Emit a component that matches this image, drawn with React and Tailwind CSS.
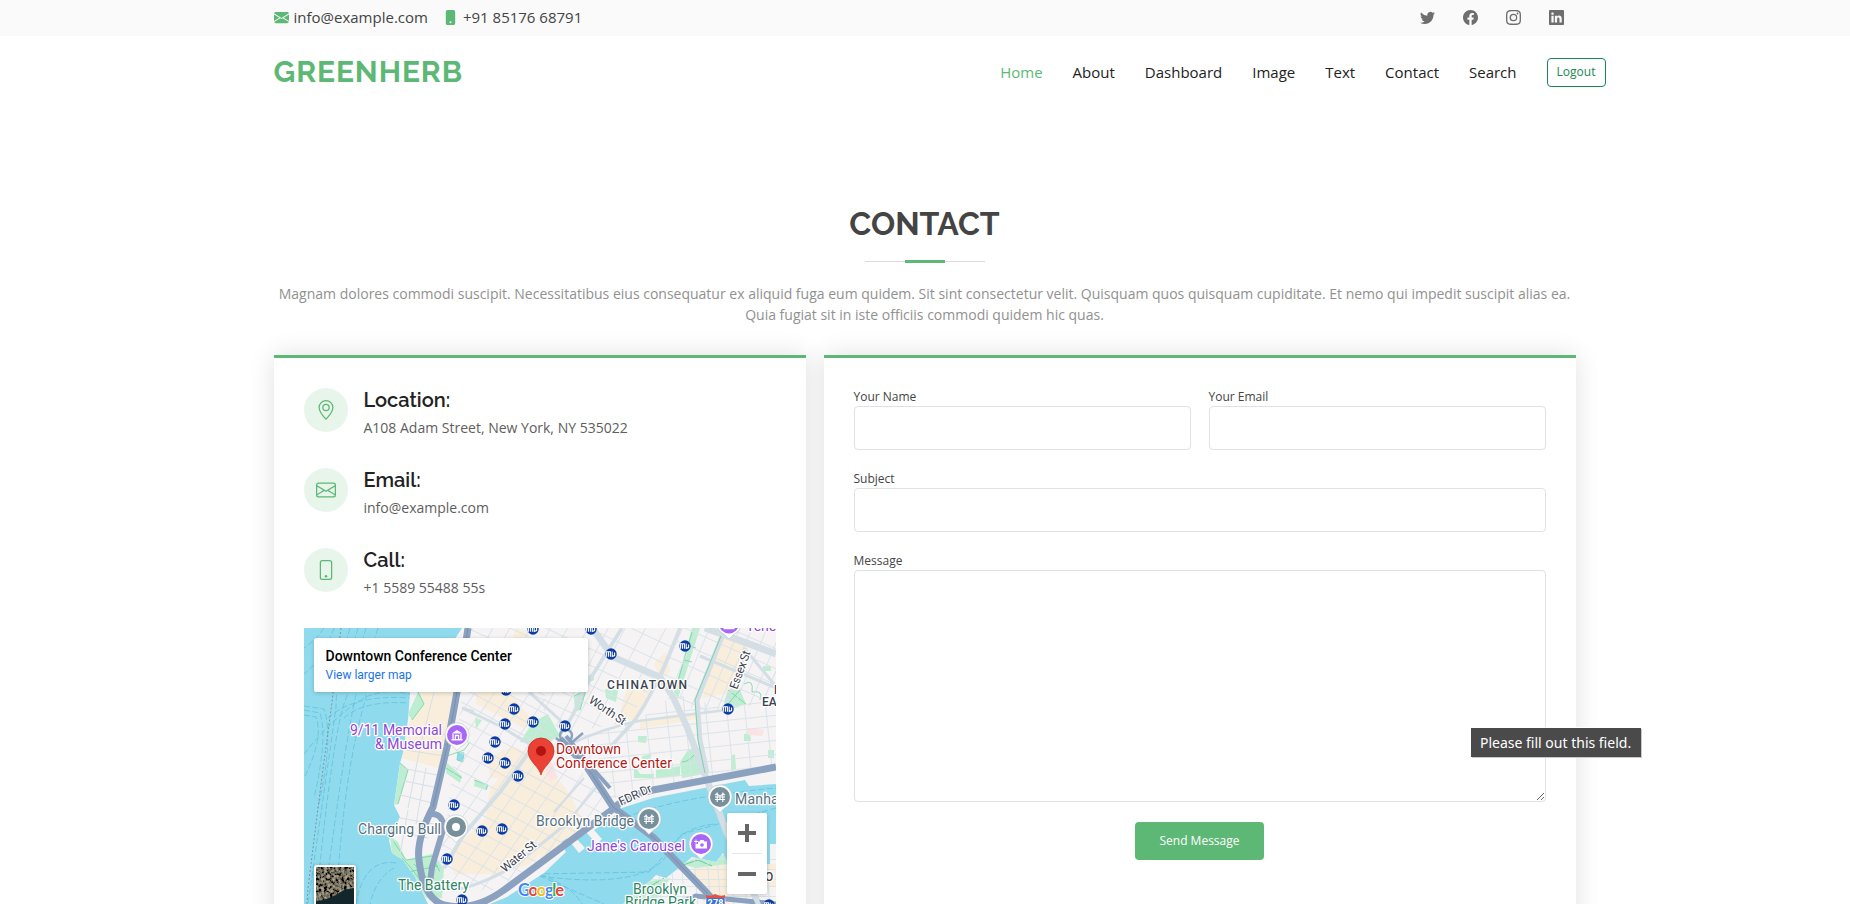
import React from "react";
import {
  BsEnvelopeFill,
  BsPhoneFill,
  BsTwitter,
  BsFacebook,
  BsInstagram,
  BsLinkedin,
  BsGeoAlt,
  BsEnvelope,
  BsPhone,
} from "react-icons/bs";

const NAV = ["Home", "About", "Dashboard", "Image", "Text", "Contact", "Search"];

function TopBar() {
  return (
    <div className="h-[36px] bg-[#fafafa]">
      <div className="mx-auto flex h-[35px] w-[1302px] items-center justify-between text-[15px] leading-[21px] text-[#444]">
        <div className="flex items-center">
          <BsEnvelopeFill className="size-[15px] text-[#5cb874]" />
          <span className="ml-[5px]">info@example.com</span>
          <BsPhoneFill className="ml-[15px] size-[15px] text-[#5cb874]" />
          <span className="ml-[5px]">+91 85176 68791</span>
        </div>
        <div className="mr-[12px] flex items-center gap-[28px] text-[#6e6e6e]">
          <BsTwitter className="size-[15px]" />
          <BsFacebook className="size-[15px]" />
          <BsInstagram className="size-[15px]" />
          <BsLinkedin className="size-[15px]" />
        </div>
      </div>
    </div>
  );
}

function Header() {
  return (
    <header className="mx-auto flex h-[72px] w-[1302px] items-center justify-between">
      <h1 className="-mt-[1px] font-['Raleway','Lato',sans-serif] text-[30px] leading-[36px] font-bold tracking-[0.9px] text-[#5cb874]">
        GREENHERB
      </h1>
      <nav className="-mr-[30px] flex items-center gap-[30px] text-[15px] leading-[22px] text-[#222]">
        {NAV.map((item, i) => (
          <a key={item} className={i === 0 ? "pb-[1px] text-[#5cb874]" : "pb-[1px]"}>
            {item}
          </a>
        ))}
        <button className="mt-[1px] h-[29px] w-[59px] rounded-[4px] border border-[#198754] pb-[1px] text-[12px] leading-[18px] text-[#198754]">
          Logout
        </button>
      </nav>
    </header>
  );
}

function InfoItem({ icon: Icon, title, text }) {
  return (
    <div className="flex h-[80px] gap-4">
      <div className="flex size-[44px] shrink-0 items-center justify-center rounded-full bg-[#e8f5eb] text-[#5cb874]">
        <Icon className="size-[20px]" />
      </div>
      <div>
        <h4 className="font-['Raleway','Lato',sans-serif] text-[20px] leading-[24px] font-semibold text-[#222]">{title}</h4>
        <p className="mt-[5px] text-[14px] leading-[21px] text-[#5e5e5e]">{text}</p>
      </div>
    </div>
  );
}

const STATIONS = [
  [229, 1], [202, 62], [210, 81], [201, 96], [229, 94], [191, 114], [184, 130],
  [201, 135], [214, 148], [150, 177], [178, 203], [198, 201], [143, 231],
  [158, 272], [287, 1], [307, 26], [381, 18], [424, 81], [261, 98], [465, 277],
];

const MANHATTAN =
  "M158 0 L132 40 L106 64 L104 92 L99 125 L96 135 L90 177 L96 189 L85 212 L88 225 L99 232 L111 249 L124 276 L176 280 L203 269 L240 245 L262 224 L257 214 L263 210 L275 225 L281 220 L270 208 L279 201 L293 216 L298 211 L290 202 L308 190 L318 180 L349 170 L400 160 L441 152 L445 158 L472 156 L472 0 Z";
const BROOKLYN =
  "M376 239 L388 229 L412 234 L419 225 L424 236 L466 236 L466 216 L472 216 L472 276 L319 276 L334 262 L346 253 L352 247 L362 250 Z";

// Evenly spaced parallel street lines around a centre point.
function Streets({ cx, cy, angle, n, gap, len, stroke = "#dae2e9", width = 0.9 }) {
  return (
    <g transform={`translate(${cx} ${cy}) rotate(${angle})`} stroke={stroke} strokeWidth={width}>
      {Array.from({ length: n }, (_, i) => {
        const y = (i - (n - 1) / 2) * gap + ((i * 7) % 3) - 1;
        return <line key={i} x1={-len / 2 + ((i * 13) % 17)} x2={len / 2 - ((i * 11) % 19)} y1={y} y2={y} />;
      })}
    </g>
  );
}

function Pin({ x, y, color, children }) {
  return (
    <g transform={`translate(${x} ${y})`}>
      <path d="M0 15.5 L-4.5 11 A12 12 0 1 1 4.5 11 Z" fill="#fff" stroke="#b9c3cc" strokeWidth="0.6" />
      <circle r="10" fill={color} />
      {children}
    </g>
  );
}

function BridgeGlyph() {
  return (
    <path
      d="M-5 0 H5 M-5 2.500 H5 M-2.8 -4.5 V5 M2.8 -4.5 V5 M-5 -2 L-2.8 -3.5 Q0 1 2.8 -3.5 L5 -2 M0 -1 V2"
      stroke="#fff"
      strokeWidth="1.1"
      fill="none"
    />
  );
}

const halo = { stroke: "#fff", strokeWidth: 2.6, strokeLinejoin: "round", paintOrder: "stroke" };

function MapDrawing() {
  return (
    <svg width="472" height="276" viewBox="0 0 472 276" className="block font-['Roboto',sans-serif]">
      <defs>
        <clipPath id="land"><path d={MANHATTAN} /></clipPath>
        <clipPath id="bk"><path d={BROOKLYN} /></clipPath>
        <clipPath id="fin"><path d="M158 64 L240 64 L250 112 L309 179 L236 233 L190 262 L150 262 L128 238 L143 190 Z" /></clipPath>
        <clipPath id="north"><path d="M166 0 L376 0 L356 49 L320 95 L258 105 L225 64 L158 64 Z" /></clipPath>
        <clipPath id="east"><path d="M331 95 L370 66 L419 80 L472 70 L472 138 L349 160 L305 172 L262 112 Z" /></clipPath>
        <clipPath id="les"><path d="M376 0 L472 0 L472 75 L393 85 L370 66 L356 49 Z" /></clipPath>
      </defs>
      <rect width="472" height="276" fill="#90daee" />

      <g fill="none" stroke="#5fc1dc" strokeWidth="0.8" strokeDasharray="6 2.5">
        <path d="M54 0 Q40 50 44 66 Q30 90 12 276" />
        <path d="M62 0 Q48 50 52 66 Q40 120 20 276" />
        <path d="M74 0 Q58 50 62 70 Q40 140 32 276" />
        <path d="M46 0 Q32 50 32 80 L4 276" />
        <path d="M30 0 Q20 30 0 46" />
        <path d="M20 0 Q12 12 0 20" />
        <path d="M0 78 L20 81 Q30 110 14 180" />
        <path d="M0 82 L16 85 Q24 110 10 170" />
        <path d="M0 87 L12 89 Q20 110 0 150" />
        <path d="M0 126 Q30 88 60 70 Q80 60 106 66" />
        <path d="M24 90 Q50 66 106 70" />
        <path d="M40 90 Q60 72 104 75" />
        <path d="M92 235 Q60 230 52 276" />
        <path d="M90 240 Q72 250 66 276" />
        <path d="M232 246 L345 244 Q362 226 378 206 L472 180" />
        <path d="M236 248 Q340 262 364 226 Q374 200 410 196" />
        <path d="M306 196 Q360 170 472 160" />
        <path d="M236 248 L300 276 M236 246 Q270 260 278 276" />
      </g>
      <path d="M37 0 L28 74 L16 164 L4 260 L3 276" fill="none" stroke="#7a93a0" strokeWidth="1" strokeDasharray="2 2" />

      <path d={MANHATTAN} fill="#f5f3f4" />
      <path d={BROOKLYN} fill="#f5f3f4" />

      <g clipPath="url(#land)">
        <g fill="#f8eedb">
          <path d="M114 64 L152 64 L135 140 L98 130 L106 92 Z" />
          <path d="M172 64 L206 64 L228 92 L220 100 L172 76 Z" />
          <path d="M226 118 L250 148 L262 160 L278 190 L262 200 L226 236 L196 246 L150 246 L146 226 L182 190 L186 160 Z" />
          <path d="M184 130 L210 118 L224 126 L206 150 L186 150 Z" />
          <path d="M318 76 L326 50 L348 60 L336 84 L330 92 L316 90 Z" />
          <path d="M350 36 L362 24 L366 44 L356 50 Z" />
          <path d="M418 4 L446 14 L432 64 L398 70 Z" />
          <path d="M212 0 L226 4 L214 30 L204 24 Z" />
          <path d="M336 94 L392 84 L392 91 L336 101 Z" />
          <path d="M240 176 L290 200 L260 222 L236 230 Z" />
        </g>
        <g fill="#bdeed1">
          <path d="M114 64 L120 76 L108 92 L104 86 Z" />
          <path d="M96 135 L104 142 L94 176 L90 177 Z" />
          <path d="M86 208 L94 214 L102 232 L128 226 L140 240 L138 270 L122 270 L99 232 L88 226 Z" />
          <path d="M229 94 L244 86 L256 108 L240 116 L216 114 Z" />
          <path d="M143 135 L158 148 L156 155 L142 145 Z" />
          <path d="M171 152 L184 157 L182 162 L170 158 Z" />
          <path d="M178 92 L172 101 L171 90 Z" />
          <path d="M301 61 L314 62 L312 74 L302 70 Z" />
          <path d="M388 0 L396 0 L374 70 L370 64 Z" />
          <path d="M270 68 L282 62 L276 82 L271 84 Z" />
          <path d="M284 48 L290 44 L290 52 L286 54 Z" />
          <path d="M424 62 L436 62 L442 76 L430 80 L420 74 Z" />
          <path d="M376 134 L384 122 L396 120 L400 146 L378 150 Z" />
          <path d="M334 108 L343 108 L342 115 L334 114 Z" />
          <path d="M338 128 L347 126 L347 134 L338 136 Z" />
          <path d="M330 136 L336 146 L350 146 L350 150 L330 150 Z" />
          <path d="M352 142 L376 138 L376 148 L352 150 Z" />
          <path d="M427 128 L431 126 L432 141 L427 142 Z" />
          <path d="M440 106 L446 105 L447 113 L440 113 Z" />
          <path d="M464 122 L470 122 L470 130 L464 130 Z" />
          <path d="M459 38 L467 38 L467 43 L459 43 Z" />
        </g>
        <g fill="none" stroke="#63cf9b" strokeWidth="0.7">
          <path d="M114 64 L120 76 L108 92 M96 135 L104 142 L94 176 M90 214 L102 232 L128 228 L136 244 M110 236 L134 262 M104 244 L134 238 M98 230 Q118 250 126 272" />
          <path d="M143 128 L160 122 L166 114 M142 140 L158 150 M170 152 L184 157 L182 162 M388 4 L372 60 M384 18 L392 20 M380 32 L388 34" />
          <path d="M270 68 L282 62 L276 82 M424 62 L442 76 M436 62 L424 76 M378 134 Q386 134 394 122 M440 56 Q450 50 448 64 Q460 62 456 72" />
        </g>
        <path d="M444 100 L460 102 L458 108 L444 107 Z" fill="#fbe3e3" />
        <path d="M247 134 L254 150 L246 153 L240 138 Z" fill="#fbe3e3" />
        <path d="M154 124 L160 125 L159 134 L153 132 Z" fill="#90daee" stroke="#63cf9b" strokeWidth="0.6" />
      </g>

      <g clipPath="url(#fin)">
        <Streets cx={205} cy={160} angle={-55} n={14} gap={15} len={250} />
        <Streets cx={205} cy={160} angle={28} n={14} gap={15} len={230} />
      </g>
      <g clipPath="url(#north)">
        <Streets cx={260} cy={45} angle={25} n={9} gap={17} len={280} />
        <Streets cx={260} cy={45} angle={-62} n={15} gap={17} len={240} />
      </g>
      <g clipPath="url(#east)">
        <Streets cx={385} cy={115} angle={-6} n={8} gap={13} len={240} />
        <Streets cx={385} cy={115} angle={84} n={11} gap={20} len={160} />
      </g>
      <g clipPath="url(#les)">
        <Streets cx={420} cy={35} angle={24} n={7} gap={17} len={180} />
        <Streets cx={420} cy={35} angle={-67} n={11} gap={13} len={160} />
      </g>
      <g clipPath="url(#land)" stroke="#d6dfe6" strokeWidth="1" fill="none">
        <path d="M106 100 L146 108 M102 122 L140 128 M98 140 L138 148 M96 152 L134 160 M93 166 L132 176 M130 64 L116 120 L104 180 M122 140 L112 196 M96 190 L130 196 M94 204 L124 210 M104 182 L96 226" />
      </g>

      <g fill="none" stroke="#d3dee5" strokeLinejoin="round">
        <path d="M158 80 L196 98 L232 120 M158 80 L170 84" strokeWidth="3" />
        <path d="M256 106 Q270 90 278 64 L318 0" strokeWidth="3.5" />
        <path d="M225 64 L256 92 L262 104" strokeWidth="3" />
        <path d="M228 120 L196 164 L160 206 L140 240" strokeWidth="4" />
        <path d="M300 150 L262 196 M280 150 L250 184" strokeWidth="2" />
        <path d="M262 118 Q300 100 334 93 L430 81" strokeWidth="2.5" />
        <path d="M376 0 L356 49 L340 78 L331 92 L300 126" strokeWidth="3.5" />
        <path d="M419 6 L393 72 L396 112 L403 145" strokeWidth="5" />
        <path d="M401 0 L440 14 L472 26" strokeWidth="7" />
        <path d="M396 28 L472 60 M440 20 L470 56" strokeWidth="3" />
        <path d="M288 0 L309 29 L356 49 L369 69 L383 99 L403 152 L423 205 L456 280" strokeWidth="6.5" />
        <path d="M440 30 L420 80" strokeWidth="2.5" />
        <path d="M150 262 Q176 258 210 238 L262 196" strokeWidth="3" />
      </g>
      <path d="M417 8 L391 72 L394 112 L401 145" fill="none" stroke="#63cf9b" strokeWidth="0.8" />

      <g clipPath="url(#bk)">
        <path d="M388 240 L424 236 L426 276 L400 276 Z" fill="#f8eedb" />
        <path d="M440 236 L472 236 L472 258 L440 262 Z" fill="#f8eedb" />
        <path d="M376 236 L396 229 L420 227 L424 236 L392 240 Z" fill="#bdeed1" />
        <path d="M346 253 L366 250 L350 276 L319 276 Z" fill="#bdeed1" />
        <path d="M340 262 L360 250 M332 270 L356 258 M376 238 L394 232 L408 238" stroke="#63cf9b" strokeWidth="1" fill="none" />
        <Streets cx={410} cy={255} angle={0} n={6} gap={9} len={160} />
        <Streets cx={410} cy={255} angle={86} n={12} gap={12} len={80} />
      </g>
      <path d="M372 276 L392 268 L472 276" fill="none" stroke="#8aa1c0" strokeWidth="5" />
      <path d="M423 205 L456 280" stroke="#d3dee5" strokeWidth="5" />

      <g fill="none" stroke="#8aa1c0" strokeLinejoin="round">
        <path d="M164 0 L158 40 L153 64 L143 119 L129 179 Q112 212 115 232 Q119 270 140 277 Q170 284 200 262 L246 228 L309 181 Q322 168 349 162 L472 139" strokeWidth="7" />
        <path d="M128 186 Q140 186 139 202 L128 239 L125 262" strokeWidth="6" />
        <path d="M256 111 L283 139 L309 179 L349 209 L403 265 L416 280" strokeWidth="7" />
        <path d="M262 108 L290 142 L306 160" strokeWidth="4" />
        <path d="M252 110 L262 118 M258 112 A6 6 0 1 1 266 112 M266 116 L279 105" strokeWidth="2.5" />
      </g>
      <path d="M164 0 L158 40 L153 64 L143 119 L129 179" fill="none" stroke="#7891b3" strokeWidth="1" />
      <path d="M256 111 L283 139 L309 179 L349 209 L403 265" fill="none" stroke="#7891b3" strokeWidth="1" />

      {STATIONS.map(([x, y]) => (
        <g key={`${x}-${y}`}>
          <circle cx={x} cy={y} r="5.7" fill="#0b3aa5" />
          <path
            d={`M${x - 4.6} ${y + 2.8} V${y - 2.2} H${x - 0.6} V${y + 2.8} M${x - 2.6} ${y - 2} V${y + 2.8} M${x + 1.2} ${y - 2.6} V${y + 2.4} L${x + 3.6} ${y + 1.6} V${y - 1.6}`}
            stroke="#fff"
            strokeWidth="1.1"
            fill="none"
          />
        </g>
      ))}

      <g fontSize="14" {...halo}>
        <g fill="#8f46d8">
          <text x="46" y="107" textLength="92">9/11 Memorial</text>
          <text x="71" y="121" textLength="67">&amp; Museum</text>
          <text x="283" y="223" textLength="98">Jane&apos;s Carousel</text>
          <text x="442" y="3">Tene</text>
        </g>
        <g fill="#567080">
          <text x="54" y="206" textLength="83">Charging Bull</text>
          <text x="232" y="198" textLength="98">Brooklyn Bridge</text>
          <text x="431" y="176" letterSpacing="0.2">Manha</text>
        </g>
        <g fill="#2c8562">
          <text x="94" y="262" textLength="71">The Battery</text>
          <text x="329" y="266" textLength="54">Brooklyn</text>
          <text x="321" y="279" textLength="71">Bridge Park</text>
        </g>
        <g fill="#b51815">
          <text x="252" y="126" textLength="65">Downtown</text>
          <text x="252" y="140" textLength="116">Conference Center</text>
        </g>
      </g>
      <g {...halo} fill="#3c4250" fontSize="12">
        <text x="303" y="61" textLength="80" fontWeight="500">CHINATOWN</text>
        <text x="470" y="66" fontWeight="500">L</text>
        <text x="458" y="78" fontWeight="500">EA</text>
        <text x="461" y="253" fontWeight="500">O</text>
        <text transform="translate(284 74) rotate(34)" textLength="42">Worth St</text>
        <text transform="translate(433 62) rotate(-70)" textLength="40">Essex St</text>
        <text transform="translate(201 245) rotate(-40)" textLength="42">Water St</text>
        <text transform="translate(317 178) rotate(-25)" textLength="35">FDR Dr</text>
      </g>

      <Pin x={153} y={107} color="#a866f8">
        <path d="M-5.5 -1.5 L0 -5 L5.5 -1.5 Z M-5.5 4 H5.5 V5.4 H-5.5 Z" fill="#fff" />
        <path d="M-4 -1 V4 M4 -1 V4 M-1.6 4 V0.5 H1.6 V4" stroke="#fff" strokeWidth="1.3" fill="none" />
      </Pin>
      <Pin x={152} y={199} color="#78909c"><circle r="4" fill="#fff" /></Pin>
      <Pin x={345} y={191} color="#78909c"><BridgeGlyph /></Pin>
      <Pin x={416} y={169} color="#78909c"><BridgeGlyph /></Pin>
      <Pin x={397} y={216} color="#a866f8">
        <path d="M-3 -2.5 H-1.5 L-0.5 -4 H2.5 L3.5 -2.5 H6 V4.5 H-5.5 V0 H-3 Z" fill="#fff" />
        <circle cx="1" cy="1" r="1.8" fill="#a866f8" />
        <path d="M-5 -4.5 V-0.5 M-7 -2.5 H-3" stroke="#fff" strokeWidth="1" />
      </Pin>
      <Pin x={425} y={-4.5} color="#a866f8">
        <path d="M-5.5 5 H5.5" stroke="#fff" strokeWidth="1.5" />
      </Pin>

      <path d="M237 147 C235.5 139 224 133 224 123 A13 13 0 0 1 250 123 C250 133 238.5 139 237 147 Z" fill="#ea4335" stroke="#c5221f" strokeWidth="0.7" />
      <circle cx="237" cy="123" r="5" fill="#b31412" />

      <rect x="402" y="269" width="19" height="12" rx="2" fill="#3f6fd0" stroke="#fff" strokeWidth="0.6" />
      <path d="M402 267 Q407 269 411 266 Q416 269 421 267 V270 H402 Z" fill="#e0534c" />
      <text x="403.5" y="278" fontSize="9" fontWeight="700" fill="#fff" textLength="16">278</text>

      <text x="214" y="268" fontSize="16.5" fontWeight="700" textLength="46" fontFamily="Lato, sans-serif" {...halo} strokeWidth="2">
        <tspan fill="#4285f4">G</tspan><tspan fill="#ea4335">o</tspan><tspan fill="#fbbc04">o</tspan><tspan fill="#4285f4">g</tspan><tspan fill="#34a853">l</tspan><tspan fill="#ea4335">e</tspan>
      </text>
    </svg>
  );
}

function SatelliteThumb() {
  return (
    <svg width="38" height="38" viewBox="0 0 38 38" className="block">
      <defs>
        <filter id="ground">
          <feTurbulence type="fractalNoise" baseFrequency="0.35" numOctaves="3" seed="4" />
          <feColorMatrix values="0.9 0 0 0 -0.28  0.85 0 0 0 -0.27  0.7 0 0 0 -0.24  0 0 0 0 1" />
        </filter>
      </defs>
      <rect width="38" height="38" filter="url(#ground)" />
      <path d="M38 21 L28 23 L20 28 L8 33 L0 34 V38 H38 Z" fill="#13262b" />
    </svg>
  );
}

function MapPanel() {
  return (
    <div className="relative h-[276px] w-[472px] overflow-hidden font-['Roboto',sans-serif]">
      <MapDrawing />
      <div className="absolute top-[10px] left-[10px] h-[54px] w-[274px] rounded-[2px] bg-white pt-[10px] pl-[12px] shadow-[0_1px_4px_rgba(0,0,0,0.2)]">
        <div className="text-[14px] leading-[17px] font-medium text-black">Downtown Conference Center</div>
        <a className="mt-[3px] block text-[12px] leading-[14px] text-[#1a73e8]">View larger map</a>
      </div>
      <div className="absolute top-[185px] left-[423px] flex h-[81px] w-[40px] flex-col items-center rounded-[2px] bg-white shadow-[0_1px_4px_rgba(0,0,0,0.2)]">
        <svg width="18" height="18" className="mt-[11px]"><path d="M0 9 H18 M9 0 V18" stroke="#666" strokeWidth="4" /></svg>
        <div className="mt-[11px] h-px w-[30px] bg-[#e6e6e6]" />
        <svg width="18" height="18" className="mt-[11px]"><path d="M0 9 H18" stroke="#666" strokeWidth="4" /></svg>
      </div>
      <div className="absolute top-[237px] left-[10px] size-[42px] rounded-[3px] border-2 border-white bg-white shadow-[0_1px_4px_rgba(0,0,0,0.3)]">
        <SatelliteThumb />
      </div>
    </div>
  );
}

function Field({ label }) {
  return (
    <label className="block flex-1 text-[12px] leading-[18px] text-[#444]">
      {label}
      <input className="block h-[44px] w-full rounded-[4px] border border-[#dee2e6] bg-white px-3" />
    </label>
  );
}

function ContactForm() {
  return (
    <form className="flex flex-col gap-[20px]">
      <div className="flex gap-[18px]">
        <Field label="Your Name" />
        <Field label="Your Email" />
      </div>
      <div className="flex"><Field label="Subject" /></div>
      <label className="block text-[12px] leading-[18px] text-[#444]">
        Message
        <textarea className="block h-[232px] w-full resize rounded-[4px] border border-[#dee2e6] bg-white" />
      </label>
      <button type="button" className="h-[38px] w-[129px] self-center rounded-[4px] bg-[#5cb874] text-[12px] leading-[18px] text-white">
        Send Message
      </button>
    </form>
  );
}

export default function App() {
  return (
    <div className="h-[904px] overflow-hidden bg-white font-['Open_Sans','Noto_Sans',sans-serif]">
      <div className="bg-[#fafafa] pr-px">
        <TopBar />
      </div>
      <div className="pr-px">
        <Header />
        <section className="mx-auto w-[1302px] pt-[97px]">
          <div className="text-center">
            <h2 className="font-['Raleway','Lato',sans-serif] text-[32px] leading-[38px] font-bold text-[#444]">CONTACT</h2>
            <div className="mx-auto mt-[17px] flex h-[3px] w-[120px] items-center justify-center">
              <div className="h-px flex-1 bg-[#ddd]" />
              <div className="h-[3px] w-[40px] bg-[#5cb874]" />
              <div className="h-px flex-1 bg-[#ddd]" />
            </div>
            <p className="mt-[20px] text-[14px] leading-[21px] text-[#919191]">
              Magnam dolores commodi suscipit. Necessitatibus eius consequatur ex aliquid fuga eum quidem. Sit sint consectetur velit. Quisquam quos quisquam cupiditate. Et nemo qui impedit suscipit alias ea.
              <br />
              Quia fugiat sit in iste officiis commodi quidem hic quas.
            </p>
          </div>
          <div className="mt-[30px] flex gap-[18px]">
            <div className="h-[600px] w-[532px] border-t-[3px] border-[#5cb874] bg-white p-[30px] shadow-[0_0_24px_0_rgba(0,0,0,0.12)]">
              <InfoItem icon={BsGeoAlt} title="Location:" text="A108 Adam Street, New York, NY 535022" />
              <InfoItem icon={BsEnvelope} title="Email:" text="info@example.com" />
              <InfoItem icon={BsPhone} title="Call:" text="+1 5589 55488 55s" />
              <MapPanel />
            </div>
            <div className="h-[600px] w-[752px] border-t-[3px] border-[#5cb874] bg-white p-[30px] shadow-[0_0_24px_0_rgba(0,0,0,0.12)]">
              <ContactForm />
            </div>
          </div>
        </section>
      </div>
      <div role="tooltip" className="absolute top-[728px] left-[1471px] flex h-[29px] w-[170px] items-center pl-[9px] bg-[#4a4a4a] whitespace-nowrap text-white shadow-[1px_1px_0_#c8c8c8,0_0_0_1px_#fff]">
        <span className="font-['Noto_Sans','Open_Sans',sans-serif] text-[14px] leading-[20px]">Please fill out this field.</span>
      </div>
    </div>
  );
}
